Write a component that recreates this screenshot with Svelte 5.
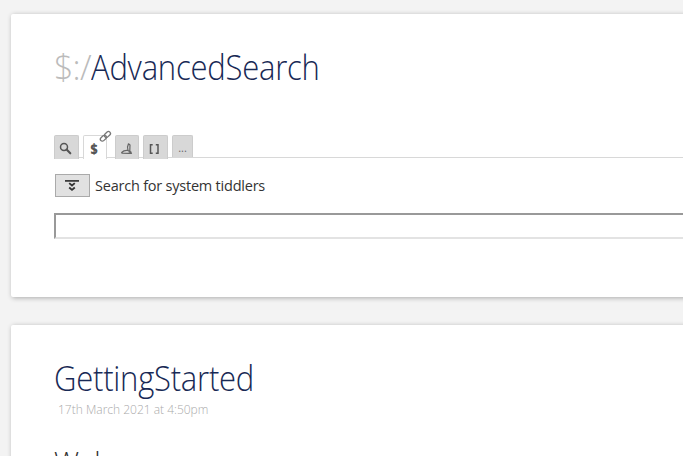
<script>
  const searchFor = 'Search for system tiddlers';
</script>

<main>
  <section class="tiddler search">
    <h1><span class="prefix">$:/</span><span class="name">AdvancedSearch</span></h1>
    <nav class="tabs">
      <button class="tab" aria-label="Standard">
        <svg width="13" height="13" viewBox="0 0 13 13"><circle cx="5" cy="5" r="3.5" fill="none" stroke="#555" stroke-width="1.5" /><path d="M7.6 7.6L11.3 11.3" stroke="#555" stroke-width="2.1" stroke-linecap="round" /></svg>
      </button>
      <button class="tab active"><b>$</b>
        <svg class="link" width="13" height="13" viewBox="0 0 13 13" fill="none" stroke="#777" stroke-width="1.3"><rect x="-3.3" y="-2" width="6.8" height="4" rx="2" transform="translate(4.3 8.3) rotate(-43)" /><rect x="-3.5" y="-2" width="6.8" height="4" rx="2" transform="translate(8.5 4.4) rotate(-43)" /></svg>
      </button>
      <button class="tab third" aria-label="Shadows">
        <svg width="12" height="12" viewBox="0 0 12 12" fill="none" stroke="#666" stroke-width="1.2" stroke-linejoin="round"><path d="M.7 9.5C2 8 4 7.2 6.7 7.4L10 9.1L7.5 10.4L1 10.2ZM7 7.5L6.5 4L7.5 .8L9 2L8.8 7.8L10.5 10.3H7" /></svg>
      </button>
      <button class="tab filter" aria-label="Filter">
        <svg width="12" height="12" viewBox="0 0 12 12" fill="none" stroke="#555" stroke-width="1.5"><path d="M4.7 1.7H2.5V10.3H4.7M7.8 1.7H10V10.3H7.8" /></svg>
      </button>
      <button class="tab more"><span>...</span></button>
    </nav>
    <div class="prompt">
      <button class="toggle" aria-label="Toggle results">
        <svg width="14" height="12" viewBox="0 0 14 12" fill="none" stroke="#333"><path d="M0 .9H14" stroke-width="1.7" /><path d="M4.2 3.1L7 5.5L9.8 3.1M4.2 7.5L7 9.9L9.8 7.5" stroke-width="1.8" /></svg>
      </button>
      <span>{searchFor}</span>
    </div>
    <input type="search" aria-label={searchFor} />
  </section>

  <section class="tiddler started">
    <h1><span class="name">GettingStarted</span></h1>
    <div class="date">17th March 2021 at 4:50pm</div>
    <h2>Welcome</h2>
  </section>
</main>

<style>
  :global(body) { margin: 0; background: #f3f3f3; overflow: hidden; }
  main { box-sizing: border-box; height: 456px; padding: 14px 0 0 11px; overflow: hidden; background: #f3f3f3; font-family: "Open Sans", sans-serif; color: #333; }
  .tiddler { box-sizing: border-box; width: 760px; padding: 31px 43px 0; background: #fff; border-radius: 2px; box-shadow: 1px 1px 5px rgba(0, 0, 0, .3); }
  .search { height: 283px; }
  .started { height: 300px; margin-top: 28px; }
  h1 { margin: 0; height: 44px; font-size: 34px; line-height: 44px; font-weight: 300; color: #182955; white-space: nowrap; }
  .name { display: inline-block; letter-spacing: -.25px; transform: scaleX(.912); transform-origin: left; }
  .prefix { display: inline-block; width: 37px; color: #bbb; letter-spacing: -.8px; }
  .tabs { display: flex; align-items: flex-end; box-sizing: border-box; height: 24px; margin-top: 45px; border-bottom: 1px solid #d8d8d8; }
  .tab { position: relative; display: flex; align-items: center; justify-content: center; box-sizing: border-box; width: 25px; height: 24px; margin: 0 4px -2px 0; padding: 2px 2px 0 0; border: 1px solid #ccc; border-bottom: 0; border-radius: 2px 2px 0 0; background: #d8d8d8; color: #666; font: 600 13px "Open Sans", sans-serif; }
  .tab.active { width: 24px; margin-right: 8px; padding: 1px 2px 0 0; background: #fff; border-color: #d8d8d8; color: #555; }
  .tab.active b { font-size: 14px; transform: scaleX(.88); }
  .tab.third { width: 24px; padding-right: 0; }
  .tab.filter { padding-right: 3px; }
  .tab.more { width: 21px; height: 22px; margin-bottom: 0; padding: 2px 0 0; font-weight: 400; font-size: 11px; }
  .link { position: absolute; top: -6px; right: -6px; }
  .prompt { display: flex; align-items: center; height: 23px; margin-top: 16px; padding-left: 1px; font-size: 14.5px; letter-spacing: -.22px; }
  .toggle { display: flex; align-items: center; justify-content: center; box-sizing: border-box; width: 35px; height: 23px; margin-right: 5px; padding: 0 1px 0 0; border: 1px solid #aaa; background: #e1e1e1; }
  input { display: block; box-sizing: border-box; width: 672px; height: 26px; margin-top: 16px; border: 2px solid #999; border-right-color: #e3e3e3; border-bottom-color: #e3e3e3; background: #fff; appearance: none; }
  .date { height: 20px; margin-left: 4px; font-size: 12px; font-weight: 300; line-height: 20px; color: #aaa; }
  h2 { margin: 21px 0 0; font-size: 28px; line-height: 40px; font-weight: 300; color: #333; }
</style>
